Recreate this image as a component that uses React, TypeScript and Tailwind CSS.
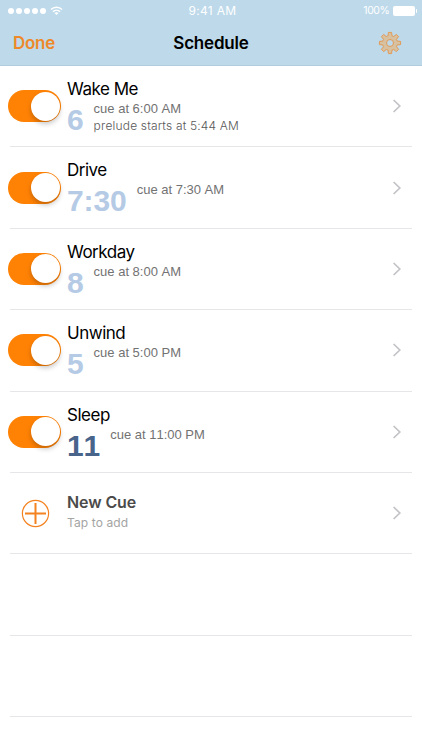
import React, { useState } from 'react';

type Cue = {
  name: string;
  time: string;
  detail: string;
  prelude?: string;
  night?: boolean;
};

const cues: Cue[] = [
  { name: 'Wake Me', time: '6', detail: 'cue at 6:00 AM', prelude: 'prelude starts at 5:44 AM' },
  { name: 'Drive', time: '7:30', detail: 'cue at 7:30 AM' },
  { name: 'Workday', time: '8', detail: 'cue at 8:00 AM' },
  { name: 'Unwind', time: '5', detail: 'cue at 5:00 PM' },
  { name: 'Sleep', time: '11', detail: 'cue at 11:00 PM', night: true },
];

// outline of a gear with eight teeth, centred on 0,0
const gearPath = () => {
  const points: string[] = [];
  for (let i = 0; i < 8; i++) {
    const corners = [[-15, 7.5], [-8.5, 10.7], [8.5, 10.7], [15, 7.5]];
    corners.forEach(([deg, r]) => {
      const a = ((i * 45 + deg) * Math.PI) / 180;
      points.push((Math.sin(a) * r).toFixed(2) + ' ' + (-Math.cos(a) * r).toFixed(2));
    });
  }
  return 'M' + points.join('L') + 'Z';
};

function StatusBar() {
  return (
    <div className="grid h-5 grid-cols-3 items-center pt-[2px] text-white">
      <div className="flex items-center pl-2">
        <div className="flex gap-[1.7px]">
          {[0, 1, 2, 3, 4].map((n) => (
            <span key={n} className="h-[6.3px] w-[6.3px] rounded-full bg-white" />
          ))}
        </div>
        <svg className="ml-[4px]" width="13" height="10" viewBox="0 0 14 10" fill="none" stroke="currentColor" strokeWidth="1.5">
          <path d="M1 3.5C4.3 .2 9.7 .2 13 3.5M3.1 5.7C5.3 3.6 8.7 3.6 10.9 5.7" />
          <path d="M4.8 7.2C6 6 8 6 9.2 7.2L7 9.4Z" fill="currentColor" stroke="none" />
        </svg>
      </div>
      <div className="pl-[3px] text-center text-[12px] leading-none tracking-[0.3px]">9:41 AM</div>
      <div className="flex items-center justify-end pr-[5px]">
        <span className="text-[10.5px] leading-none tracking-[-0.4px]">100%</span>
        <span className="ml-[3px] h-[10px] w-[22.5px] rounded-[2px] bg-white" />
        <span className="ml-[0.5px] h-[4px] w-[1.5px] rounded-r-full bg-white" />
      </div>
    </div>
  );
}

function Chevron() {
  return (
    <svg className="mr-[20px] shrink-0" width="10" height="14" viewBox="0 0 10 14" fill="none" stroke="#c3c3c7" strokeWidth="1.7">
      <path d="M1.6 1L7.8 7L1.6 13" />
    </svg>
  );
}

function Row({ children }: { children?: React.ReactNode }) {
  return (
    <div className="flex h-[81.4px] flex-col">
      <div className="flex min-h-0 flex-1 items-center">{children}</div>
      <div className="mr-[10px] ml-[10px] h-px shrink-0 bg-[#e6e6e8]" />
    </div>
  );
}

function CueRow({ cue }: { cue: Cue }) {
  const [on, setOn] = useState(true);

  return (
    <Row>
      <button
        role="switch"
        aria-checked={on}
        aria-label={cue.name}
        onClick={() => setOn(!on)}
        className={'ml-[8px] flex h-[32px] w-[53px] shrink-0 items-center rounded-full p-[1.5px] ' + (on ? 'justify-end bg-[#ff8205]' : 'justify-start bg-gray-200')}
      >
        <span className="h-[29px] w-[29px] rounded-full bg-white shadow-[0_3px_5px_rgba(0,0,0,0.22)]" />
      </button>
      <div className="ml-[6px] h-full flex-1 pt-[12px]">
        <div className="text-[17px] leading-[22px] tracking-[-0.48px] text-black">{cue.name}</div>
        <div className="flex gap-[10px] [font-kerning:none]">
          <div className={'pt-[5px] font-["Liberation_Sans",sans-serif] text-[30px] leading-[30px] font-bold tracking-[-0.1px] ' + (cue.night ? 'text-[#48648b]' : 'text-[#b5cae5]')}>{cue.time}</div>
          <div className="text-[#727272]">
            <div className='font-["Liberation_Sans",sans-serif] text-[13px] leading-[18px]'>{cue.detail}</div>
            {cue.prelude && <div className="text-[12px] leading-[16px] font-light tracking-[0.17px] text-[#585858]">{cue.prelude}</div>}
          </div>
        </div>
      </div>
      <Chevron />
    </Row>
  );
}

export default function App() {
  return (
    <div className='h-[750px] w-full overflow-hidden bg-white font-["Inter",sans-serif]'>
      <header className="h-[66px] border-b border-[#b3ccdc] bg-[#bdd9ea]">
        <StatusBar />
        <div className="grid h-[46px] grid-cols-3 items-center">
          <button className="pt-[2px] pl-[13px] text-left text-[17px] font-semibold tracking-[-0.3px] text-[#ee892b]">Done</button>
          <h1 className="pt-[2px] text-center text-[17px] font-semibold tracking-[-0.2px] text-black">Schedule</h1>
          <button aria-label="Settings" className="justify-self-end pr-[20px]">
            <svg width="24" height="24" viewBox="-12 -12 24 24" stroke="#e39a55" strokeWidth="1" strokeLinejoin="round">
              <path d={gearPath()} fill="#d8c1a0" />
              <circle r="3.5" fill="#bdd9ea" />
            </svg>
          </button>
        </div>
      </header>

      <main>
        {cues.map((cue) => <CueRow key={cue.name} cue={cue} />)}
        <Row>
          <svg className="ml-[21px] shrink-0" width="29" height="29" viewBox="0 0 29 29" fill="none" stroke="#f48220">
            <circle cx="14.5" cy="14.5" r="13.1" strokeWidth="1.2" />
            <path d="M14.5 4V25M4 14.5H25" strokeWidth="2" />
          </svg>
          <div className="ml-[17px] flex-1 pb-[2px]">
            <div className="text-[16px] leading-[22px] font-semibold tracking-[-0.1px] text-[#4b4b4b]">New Cue</div>
            <div className="text-[12px] leading-[20px] tracking-[0.1px] text-[#a4a4a4]">Tap to add</div>
          </div>
          <Chevron />
        </Row>
        <Row />
        <Row />
      </main>
    </div>
  );
}
